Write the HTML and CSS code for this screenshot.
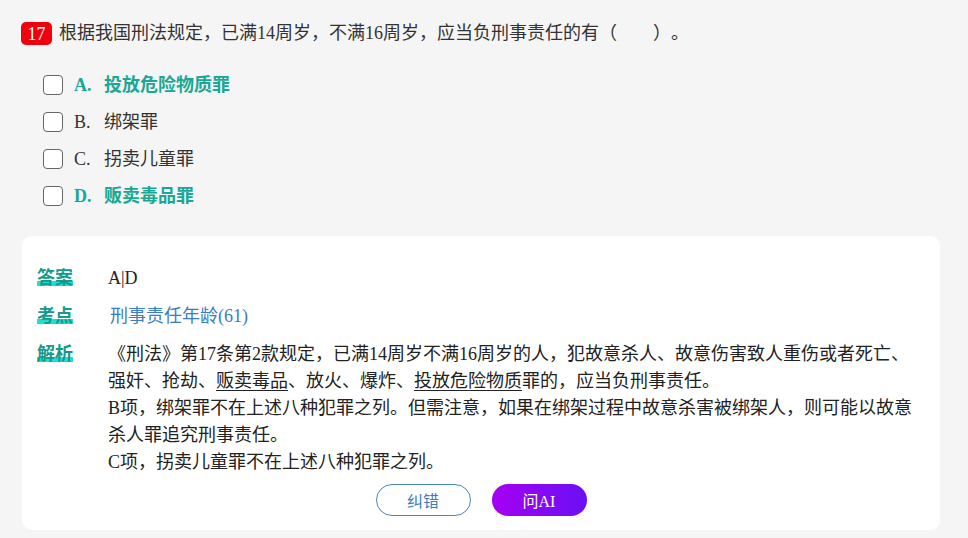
FILE: index.html
```html
<!DOCTYPE html>
<html lang="zh-CN">
<head>
<meta charset="utf-8">
<link rel="stylesheet" href="styles.css">
</head>
<body>
<div class="page">
  <div class="question">
    <span class="badge">17</span>
    <span class="qtext">根据我国刑法规定，已满14周岁，不满16周岁，应当负刑事责任的有（　　）。</span>
  </div>
  <ul class="options">
    <li class="option correct"><span class="box"></span><span class="olabel"><span class="key">A.</span>投放危险物质罪</span></li>
    <li class="option"><span class="box"></span><span class="olabel"><span class="key">B.</span>绑架罪</span></li>
    <li class="option"><span class="box"></span><span class="olabel"><span class="key">C.</span>拐卖儿童罪</span></li>
    <li class="option correct"><span class="box"></span><span class="olabel"><span class="key">D.</span>贩卖毒品罪</span></li>
  </ul>
  <div class="card">
    <div class="row">
      <div class="label"><span class="hl">答案</span></div>
      <div class="value">A|D</div>
    </div>
    <div class="row">
      <div class="label"><span class="hl">考点</span></div>
      <div class="value link">刑事责任年龄(61)</div>
    </div>
    <div class="row">
      <div class="label"><span class="hl">解析</span></div>
      <div class="value explain">《刑法》第17条第2款规定，已满14周岁不满16周岁的人，犯故意杀人、故意伤害致人重伤或者死亡、强奸、抢劫、<u>贩卖毒品</u>、放火、爆炸、<u>投放危险物质</u>罪的，应当负刑事责任。<br>B项，绑架罪不在上述八种犯罪之列。但需注意，如果在绑架过程中故意杀害被绑架人，则可能以故意杀人罪追究刑事责任。<br>C项，拐卖儿童罪不在上述八种犯罪之列。</div>
    </div>
    <div class="actions">
      <button class="btn btn-outline">纠错</button>
      <button class="btn btn-ai">问AI</button>
    </div>
  </div>
</div>
</body>
</html>
```
FILE: styles.css
```css
* { box-sizing: border-box; }
html, body {
  margin: 0;
  padding: 0;
  background: #f5f5f5;
}
body {
  font-family: "Liberation Serif", "Noto Sans CJK SC", serif;
  color: #333;
  font-size: 18px;
  width: 968px;
  height: 538px;
  overflow: hidden;
  text-spacing-trim: space-all;
}
.page {
  padding: 22px 28px 0 21px;
}
.question {
  display: flex;
  align-items: center;
  height: 23px;
}
.badge {
  display: inline-flex;
  align-items: center;
  justify-content: center;
  width: 31px;
  height: 23px;
  background: #f0000c;
  color: #fff;
  border-radius: 5px;
  font-size: 18px;
  line-height: 1;
}
.qtext {
  margin-left: 7px;
  line-height: 23px;
}
.options {
  list-style: none;
  margin: 28px 0 0 22px;
  padding: 0;
  display: flex;
  flex-direction: column;
  gap: 13px;
}
.option {
  display: flex;
  align-items: center;
  height: 24px;
}
.box {
  width: 20px;
  height: 20px;
  border: 1.5px solid #666;
  border-radius: 4px;
  background: #fff;
  flex: none;
}
.olabel {
  margin-left: 11px;
  line-height: 24px;
}
.key {
  display: inline-block;
  width: 30px;
}
.correct .olabel {
  color: #18a893;
  font-weight: bold;
}
.card {
  margin: 28px 0 0 1px;
  width: 918px;
  height: 294px;
  background: #fff;
  border-radius: 10px;
  padding: 29px 20px 15px 15px;
  display: flex;
  flex-direction: column;
  gap: 11px;
}
.row {
  display: flex;
  line-height: 27px;
}
.label {
  width: 71px;
  flex: none;
  color: #149a8a;
  font-weight: bold;
}
.hl {
  background: linear-gradient(to bottom, transparent 64%, #18e2d6 64%, #18e2d6 88%, transparent 88%);
}
.value {
  flex: 1;
  color: #222;
}
.link {
  color: #3a7dc2;
  padding-left: 2px;
}
.explain u {
  text-decoration-thickness: 1px;
  text-underline-offset: 3px;
}
.actions {
  display: flex;
  justify-content: center;
  gap: 21px;
  margin-top: -3px;
  padding-left: 5px;
}
.btn {
  width: 95px;
  height: 32px;
  border-radius: 16px;
  font-family: "Liberation Serif", "Noto Sans CJK SC", serif;
  font-size: 16px;
  cursor: pointer;
  padding: 0;
}
.btn-outline {
  background: #fff;
  border: 1px solid #4a86c2;
  color: #3a7dc2;
}
.btn-ai {
  border: none;
  color: #fff;
  background: linear-gradient(90deg, #a600f2, #6a10f5);
}
```
